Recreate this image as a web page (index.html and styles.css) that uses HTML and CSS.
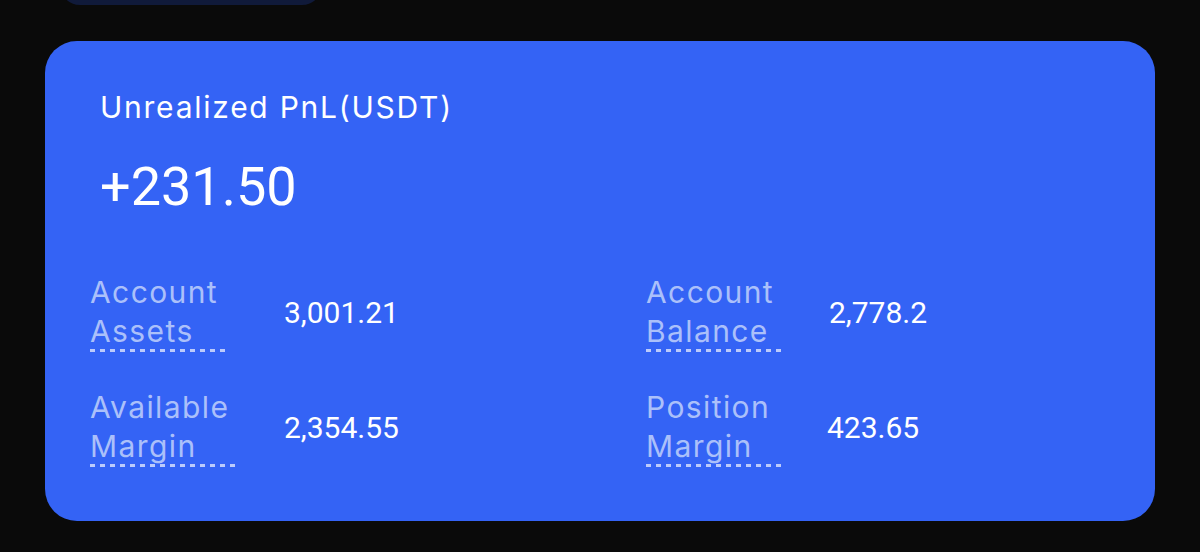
FILE: index.html
```html
<!DOCTYPE html>
<html lang="en">
<head>
<meta charset="utf-8">
<title>Unrealized PnL</title>
<link rel="stylesheet" href="styles.css">
</head>
<body>
<div class="top-tab"></div>
<section class="card">
  <div class="head">
    <div class="title">Unrealized PnL(USDT)</div>
    <div class="pnl">+231.50</div>
  </div>
  <div class="stats">
    <div class="label"><span class="dash">Account<br>Assets</span></div>
    <div class="value">3,001.21</div>
    <div class="label"><span class="dash">Account<br>Balance</span></div>
    <div class="value value-b">2,778.2</div>
    <div class="label"><span class="dash">Available<br>Margin</span></div>
    <div class="value">2,354.55</div>
    <div class="label"><span class="dash">Position<br>Margin</span></div>
    <div class="value">423.65</div>
  </div>
</section>
</body>
</html>
```

FILE: styles.css
```css
html, body {
  margin: 0;
  padding: 0;
  background: #0a0a0a;
}
body {
  width: 1200px;
  height: 552px;
  overflow: hidden;
  font-family: Roboto, "Liberation Sans", sans-serif;
}
.top-tab {
  width: 262px;
  height: 40px;
  margin: -35px 0 0 60px;
  background: #101a3a;
  border-radius: 22px;
}
.card {
  box-sizing: border-box;
  width: 1110px;
  height: 480px;
  margin: 36px 0 0 45px;
  padding: 48px 45px 0 45px;
  background: #3463f5;
  border-radius: 32px;
  color: #fff;
}
.head {
  padding-left: 10px;
}
.title {
  font-family: Inter, Roboto, sans-serif;
  font-size: 30px;
  line-height: 36px;
  letter-spacing: 1.75px;
  color: #fff;
}
.pnl {
  margin-top: 30px;
  font-size: 54px;
  line-height: 64px;
  color: #fff;
}
.stats {
  margin-top: 54px;
  display: grid;
  grid-template-columns: 194px 362px 181px 1fr;
  row-gap: 36px;
  align-items: center;
}
.label {
  font-family: Inter, Roboto, sans-serif;
  font-size: 30px;
  line-height: 39px;
  letter-spacing: 1.4px;
  color: #abc0fa;
}
.dash {
  display: inline-block;
  padding-right: 11px;
  padding-bottom: 1px;
  background-image: linear-gradient(to right, #bccbfb 50%, transparent 50%);
  background-size: 10px 3px;
  background-repeat: repeat-x;
  background-position: left bottom;
}
.value {
  font-size: 30px;
  line-height: 36px;
  color: #fff;
}
.value-b {
  padding-left: 2px;
}
```
